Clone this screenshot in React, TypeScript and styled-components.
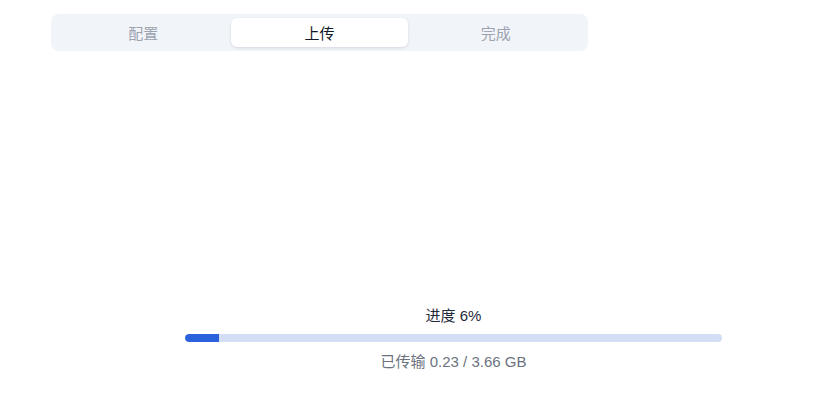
import styled, { createGlobalStyle } from 'styled-components'

const GlobalStyle = createGlobalStyle`
  html, body {
    margin: 0;
    padding: 0;
    background: #ffffff;
    font-family: "Liberation Sans", "Noto Sans CJK SC", sans-serif;
  }
`

const Page = styled.div`
  width: 831px;
  height: 405px;
  display: flex;
  flex-direction: column;
  padding-top: 14px;
  box-sizing: border-box;
`

const TabBar = styled.div`
  margin-left: 51px;
  width: 537px;
  height: 37px;
  box-sizing: border-box;
  padding: 4px;
  display: grid;
  grid-template-columns: repeat(3, 1fr);
  background: #f1f4f9;
  border-radius: 8px;
`

const Tab = styled.div<{ $active?: boolean }>`
  display: flex;
  align-items: center;
  justify-content: center;
  padding-bottom: 1px;
  border-radius: 6px;
  font-size: 15px;
  color: ${(p) => (p.$active ? '#111827' : '#9ca3af')};
  background: ${(p) => (p.$active ? '#ffffff' : 'transparent')};
  box-shadow: ${(p) =>
    p.$active ? '0 1px 3px rgba(15, 23, 42, 0.12)' : 'none'};
`

const Progress = styled.div`
  margin-top: 256px;
  margin-left: 185px;
  width: 537px;
  display: flex;
  flex-direction: column;
  align-items: center;
`

const Label = styled.div`
  font-size: 15px;
  line-height: 18px;
  color: #1f2937;
`

const Track = styled.div`
  margin-top: 9px;
  width: 100%;
  height: 8px;
  border-radius: 4px;
  background: #d3def6;
  overflow: hidden;
`

const Fill = styled.div`
  height: 100%;
  background: #2b61db;
  border-radius: 4px 0 0 4px;
`

const Stats = styled.div`
  margin-top: 11px;
  font-size: 15px;
  line-height: 18px;
  color: #6b7280;
`

const tabs = ['配置', '上传', '完成']
const current = 1
const transferred = 0.23
const total = 3.66
const percent = 6.3

export default function App() {
  return (
    <>
      <GlobalStyle />
      <Page>
        <TabBar>
          {tabs.map((t, i) => (
            <Tab key={t} $active={i === current}>
              {t}
            </Tab>
          ))}
        </TabBar>
        <Progress>
          <Label>进度 {Math.round(percent)}%</Label>
          <Track>
            <Fill style={{ width: `${percent}%` }} />
          </Track>
          <Stats>
            已传输 {transferred.toFixed(2)} / {total.toFixed(2)} GB
          </Stats>
        </Progress>
      </Page>
    </>
  )
}
